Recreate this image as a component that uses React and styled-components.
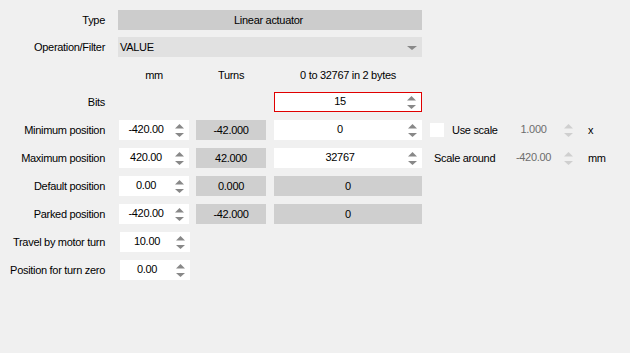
import styled, { createGlobalStyle } from 'styled-components';

const Global = createGlobalStyle`
	html, body {
		margin: 0;
		padding: 0;
		background: #f0f0f0;
		height: 100%;
	}
	#root {
		min-height: 100%;
	}
`;

const Form = styled.div`
	padding-top: 10px;
	font-family: 'Liberation Sans', Arial, sans-serif;
	font-size: 11px;
	letter-spacing: -0.3px;
	color: #000;
	background: #f0f0f0;
	min-height: 353px;
	box-sizing: border-box;
`;

const Row = styled.div`
	display: flex;
	align-items: center;
	height: 20px;
	margin-top: ${(p) => p.$gap ?? 8}px;
`;

const Label = styled.div`
	flex: none;
	width: 105px;
	margin-right: ${(p) => p.$mr ?? 14}px;
	text-align: right;
	white-space: nowrap;
`;

const Bar = styled.div`
	width: 304px;
	height: 20px;
	display: flex;
	align-items: center;
	justify-content: ${(p) => (p.$select ? 'space-between' : 'center')};
	padding: 0 5px 0 2px;
	box-sizing: border-box;
	background: ${(p) => (p.$select ? '#e1e1e1' : '#cccccc')};
`;

const Caret = styled.span`
	width: 0;
	height: 0;
	border-left: 5px solid transparent;
	border-right: 5px solid transparent;
	border-top: 4px solid #888;
	margin-top: 1px;
`;

const Head = styled.div`
	flex: none;
	width: ${(p) => p.$w}px;
	margin-left: ${(p) => p.$ml ?? 0}px;
	text-align: center;
	white-space: nowrap;
`;

const Spacer = styled.div`
	flex: none;
	width: ${(p) => p.$w}px;
`;

const Field = styled.div`
	flex: none;
	width: ${(p) => p.$w}px;
	height: 20px;
	margin-left: ${(p) => p.$ml ?? 0}px;
	display: flex;
	align-items: center;
	box-sizing: border-box;
	background: #fff;
	border: ${(p) => (p.$error ? '1px solid #e00000' : 'none')};
`;

const FieldText = styled.div`
	flex: 1;
	text-align: center;
	padding-bottom: 2px;
`;

const Box = styled.div`
	flex: none;
	width: ${(p) => p.$w}px;
	height: 20px;
	margin-left: ${(p) => p.$ml ?? 0}px;
	display: flex;
	align-items: center;
	justify-content: center;
	background: #cfcfcf;
`;

const Check = styled.div`
	flex: none;
	width: 14px;
	height: 14px;
	margin-left: 8px;
	margin-right: 8px;
	background: #fff;
`;

const SideLabel = styled.div`
	flex: none;
	width: ${(p) => p.$w}px;
	margin-left: ${(p) => p.$ml ?? 0}px;
	white-space: nowrap;
`;

const Dim = styled.div`
	flex: none;
	width: 73px;
	height: 20px;
	display: flex;
	align-items: center;
	color: #6d6d6d;
`;

const Unit = styled.div`
	margin-left: 10px;
`;

const SpinWrap = styled.svg`
	flex: none;
	margin: 0 5px 0 2px;
	display: block;
`;

const Spin = ({ dim }) => (
	<SpinWrap width="9" height="13" viewBox="0 0 9 13">
		<polygon points="4.5,0 9,4.5 0,4.5" fill={dim ? '#cfcfcf' : '#888'} />
		<polygon points="0,9 9,9 4.5,13" fill={dim ? '#cfcfcf' : '#888'} />
	</SpinWrap>
);

const MmField = ({ value, w = 70 }) => (
	<Field $w={w}>
		<FieldText>{value}</FieldText>
		<Spin />
	</Field>
);

const BytesField = ({ value, error }) => (
	<Field $w={148} $ml={8} $error={error}>
		<FieldText>{value}</FieldText>
		<Spin />
	</Field>
);

const positions = [
	{ label: 'Default position', mm: '0.00', turns: '0.000', bytes: '0' },
	{ label: 'Parked position', mm: '-420.00', turns: '-42.000', bytes: '0' },
];

const App = () => {
	return (
		<>
			<Global />
			<Form>
				<Row $gap={0}>
					<Label $mr={13}>Type</Label>
					<Bar>Linear actuator</Bar>
				</Row>
				<Row $gap={7}>
					<Label $mr={13}>Operation/Filter</Label>
					<Bar $select>
						<span>VALUE</span>
						<Caret />
					</Bar>
				</Row>
				<Row $gap={8}>
					<Label />
					<Head $w={70}>mm</Head>
					<Head $w={70} $ml={7}>
						Turns
					</Head>
					<Head $w={148} $ml={8}>
						0 to 32767 in 2 bytes
					</Head>
				</Row>
				<Row $gap={7}>
					<Label>Bits</Label>
					<Spacer $w={147} />
					<BytesField value="15" error />
				</Row>
				<Row>
					<Label>Minimum position</Label>
					<MmField value="-420.00" />
					<Box $w={70} $ml={7}>
						-42.000
					</Box>
					<BytesField value="0" />
					<Check />
					<SideLabel $w={53}>Use scale</SideLabel>
					<Dim>
						<FieldText>1.000</FieldText>
						<Spin dim />
					</Dim>
					<Unit>x</Unit>
				</Row>
				<Row>
					<Label>Maximum position</Label>
					<MmField value="420.00" />
					<Box $w={70} $ml={7}>
						42.000
					</Box>
					<BytesField value="32767" />
					<SideLabel $w={71} $ml={12}>
						Scale around
					</SideLabel>
					<Dim>
						<FieldText>-420.00</FieldText>
						<Spin dim />
					</Dim>
					<Unit>mm</Unit>
				</Row>
				{positions.map((p) => (
					<Row key={p.label}>
						<Label>{p.label}</Label>
						<MmField value={p.mm} />
						<Box $w={70} $ml={7}>
							{p.turns}
						</Box>
						<Box $w={148} $ml={8}>
							{p.bytes}
						</Box>
					</Row>
				))}
				<Row>
					<Label $mr={15}>Travel by motor turn</Label>
					<MmField value="10.00" />
				</Row>
				<Row>
					<Label $mr={15}>Position for turn zero</Label>
					<MmField value="0.00" />
				</Row>
			</Form>
		</>
	);
};

export default App;
